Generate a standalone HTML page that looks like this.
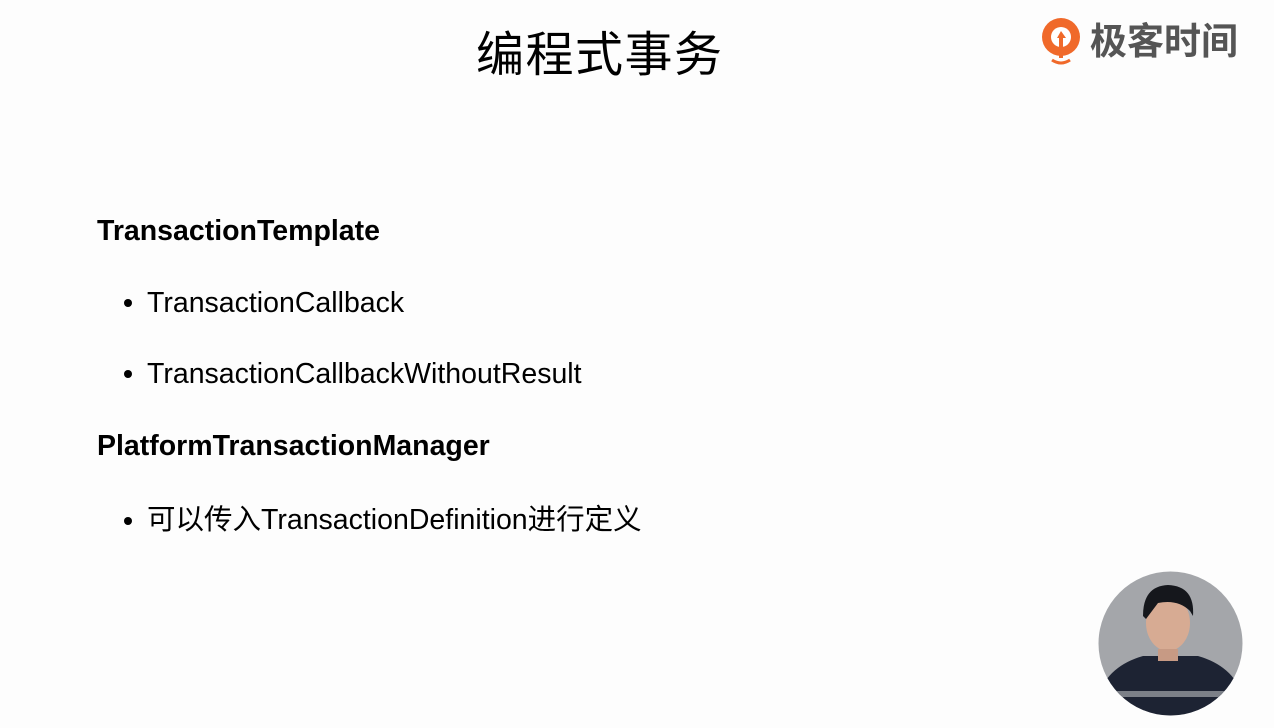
<!DOCTYPE html>
<html><head><meta charset="utf-8"><style>
html,body{margin:0;padding:0;}
body{width:1274px;height:728px;background:#fdfdfd;position:relative;overflow:hidden;font-family:"Liberation Sans","Noto Sans CJK SC",sans-serif;color:#000;}
.t{position:absolute;white-space:nowrap;line-height:32px;}
.title{left:476px;top:26px;font-size:48px;line-height:60px;letter-spacing:1.5px;}
.h{font-weight:bold;font-size:28.5px;left:97px;}
.li{font-size:28.5px;left:147px;}
.dot{position:absolute;width:8px;height:8px;border-radius:50%;background:#000;}
</style></head><body>
<div class="t title">编程式事务</div>
<div class="t h" style="top:215px">TransactionTemplate</div>
<div class="dot" style="left:124px;top:299px"></div>
<div class="t li" style="top:287px">TransactionCallback</div>
<div class="dot" style="left:124px;top:370px"></div>
<div class="t li" style="top:358px">TransactionCallbackWithoutResult</div>
<div class="t h" style="top:430px">PlatformTransactionManager</div>
<div class="dot" style="left:124px;top:517px"></div>
<div class="t li" style="top:504px">可以传入TransactionDefinition进行定义</div>

<svg style="position:absolute;left:1040px;top:16px" width="46" height="50" viewBox="0 0 46 50">
<circle cx="21" cy="21" r="19" fill="#f0692a"/>
<circle cx="21" cy="21" r="10" fill="#fff"/>
<path d="M17 22 L21 15 L26 22 L23 22 L23 42 L19 42 L19 22 Z" fill="#f0692a"/>
<path d="M12 44 Q21 50 30 44" stroke="#f0692a" stroke-width="3" fill="none"/>
</svg>
<div class="t" style="left:1090px;top:22px;font-size:37px;line-height:40px;color:#555;font-weight:bold;">极客时间</div>

<svg style="position:absolute;left:1098px;top:571px" width="145" height="145" viewBox="0 0 145 145">
<defs><clipPath id="c"><circle cx="72.5" cy="72.5" r="72"/></clipPath></defs>
<g clip-path="url(#c)">
<rect width="145" height="145" fill="#a4a6aa"/>
<path d="M0 125 Q10 95 45 85 L100 85 Q135 95 145 125 L145 145 L0 145Z" fill="#1d2333"/>
<rect x="0" y="120" width="145" height="6" fill="#7c8088"/>
<ellipse cx="70" cy="52" rx="22" ry="28" fill="#d7ab93"/>
<path d="M45 45 Q45 15 70 14 Q97 15 95 45 L92 40 Q80 28 60 32 L48 48Z" fill="#15171c"/>
<rect x="60" y="78" width="20" height="12" fill="#c79a84"/>
</g></svg>
</body></html>
